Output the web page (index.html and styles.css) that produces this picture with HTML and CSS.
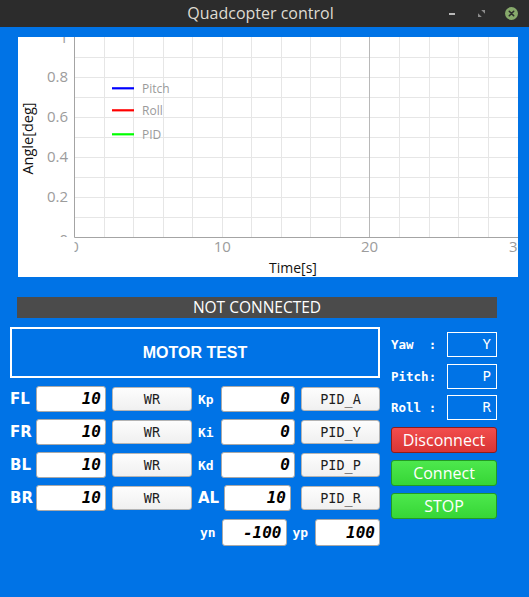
FILE: index.html
```html
<!DOCTYPE html>
<html>
<head>
<meta charset="utf-8">
<title>Quadcopter control</title>
<link rel="stylesheet" href="styles.css">
</head>
<body>
<div class="titlebar">
  <div class="title">Quadcopter control</div>
  <div class="controls">
    <span class="min"></span>
    <svg class="restore" width="7" height="7" viewBox="0 0 7 7"><path d="M0 7V3.2L3.8 7Z M7 0V3.8L3.2 0Z" fill="#8c8c8c"/></svg>
    <svg class="close" width="13" height="13" viewBox="0 0 13 13"><circle cx="6.5" cy="6.5" r="6.5" fill="#87a96b"/><path d="M4.3 4.3L8.7 8.7M8.7 4.3L4.3 8.7" stroke="#2c2c2c" stroke-width="1.6" stroke-linecap="round"/></svg>
  </div>
</div>

<div class="chart">
  <svg width="500" height="240" viewBox="0 0 500 240" font-family="'Open Sans', sans-serif">
    <defs>
      <clipPath id="cy"><rect x="0" y="0" width="60" height="200"/></clipPath>
      <clipPath id="cx"><rect x="56.5" y="200" width="444" height="40"/></clipPath>
    </defs>
    <path d="M56 20.5H500M56 40.5H500M56 60.5H500M56 80.5H500M56 100.5H500M56 120.5H500M56 140.5H500M56 160.5H500M56 180.5H500" stroke="#e6e6e6" stroke-width="1" fill="none"/>
    <path d="M86.5 0V200M115.5 0V200M145.5 0V200M174.5 0V200M204.5 0V200M233.5 0V200M263.5 0V200M292.5 0V200M322.5 0V200M381.5 0V200M411.5 0V200M440.5 0V200M470.5 0V200" stroke="#e6e6e6" stroke-width="1" fill="none"/>
    <path d="M351.5 0V200" stroke="#b8b8b8" stroke-width="1" fill="none"/>
    <path d="M56.5 0V200.5H500" stroke="#a4a4a4" stroke-width="1" fill="none"/>
    <g clip-path="url(#cy)" fill="#9c9c9c" font-size="15" text-anchor="end">
      <text x="50" y="6.3">1</text>
      <text x="50" y="45.4">0.8</text>
      <text x="50" y="85.4">0.6</text>
      <text x="50" y="125.4">0.4</text>
      <text x="50" y="165.4">0.2</text>
      <text x="50" y="207.5">0</text>
    </g>
    <g clip-path="url(#cx)" fill="#9c9c9c" font-size="15" text-anchor="middle">
      <text x="56.5" y="214.7">0</text>
      <text x="204.3" y="214.7">10</text>
      <text x="351.5" y="214.7">20</text>
      <text x="499.5" y="214.7">30</text>
    </g>
    <text x="275" y="236.3" font-size="14" fill="#111" text-anchor="middle">Time[s]</text>
    <text transform="translate(14.5 101.5) rotate(-90)" font-size="14.5" fill="#111" text-anchor="middle">Angle[deg]</text>
    <g stroke-width="2.2">
      <path d="M94 51.3H116" stroke="#0000ff"/>
      <path d="M94 73.3H116" stroke="#ff0000"/>
      <path d="M94 97.3H116" stroke="#00ff00"/>
    </g>
    <g fill="#9a9a9a" font-size="12">
      <text x="124" y="55.6">Pitch</text>
      <text x="124" y="77.6">Roll</text>
      <text x="124" y="101.6">PID</text>
    </g>
  </svg>
</div>

<div class="status">NOT CONNECTED</div>

<div class="lower">
  <div class="left">
    <div class="motor">MOTOR TEST</div>
    <div class="rows">
      <div class="row">
        <span class="lbl big">FL</span>
        <div class="field w70">10</div>
        <div class="btn wr">WR</div>
        <span class="lbl sm">Kp</span>
        <div class="field w74">0</div>
        <div class="btn pid">PID_A</div>
      </div>
      <div class="row">
        <span class="lbl big">FR</span>
        <div class="field w70">10</div>
        <div class="btn wr">WR</div>
        <span class="lbl sm">Ki</span>
        <div class="field w74">0</div>
        <div class="btn pid">PID_Y</div>
      </div>
      <div class="row">
        <span class="lbl big">BL</span>
        <div class="field w70">10</div>
        <div class="btn wr">WR</div>
        <span class="lbl sm">Kd</span>
        <div class="field w74">0</div>
        <div class="btn pid">PID_P</div>
      </div>
      <div class="row">
        <span class="lbl big">BR</span>
        <div class="field w70">10</div>
        <div class="btn wr">WR</div>
        <span class="lbl big al">AL</span>
        <div class="field w67">10</div>
        <div class="btn pid pidr">PID_R</div>
      </div>
      <div class="row yrow">
        <span class="lbl sm yn">yn</span>
        <div class="field w65">-100</div>
        <span class="lbl sm yp">yp</span>
        <div class="field w65">100</div>
      </div>
    </div>
  </div>

  <div class="right">
    <div class="rrow"><span class="rlbl">Yaw  :</span><div class="rbox">Y</div></div>
    <div class="rrow r2"><span class="rlbl">Pitch:</span><div class="rbox">P</div></div>
    <div class="rrow r3"><span class="rlbl">Roll :</span><div class="rbox">R</div></div>
    <div class="act red">Disconnect</div>
    <div class="act green">Connect</div>
    <div class="act green">STOP</div>
  </div>
</div>
</body>
</html>
```

FILE: styles.css
```css
html, body {
  margin: 0;
  padding: 0;
}
body {
  width: 529px;
  height: 597px;
  overflow: hidden;
  background: #0073e6;
  font-family: "Open Sans", "DejaVu Sans", sans-serif;
}

/* title bar */
.titlebar {
  height: 27px;
  background: #2c2c2c;
  display: flex;
  align-items: center;
}
.title {
  flex: 1;
  padding-left: 81px;
  text-align: center;
  color: #dfdbd2;
  font-size: 16px;
  line-height: 27px;
}
.controls {
  width: 89px;
  display: flex;
  align-items: center;
  padding-left: 9px;
  box-sizing: border-box;
}
.min {
  width: 6px;
  height: 2px;
  background: #b8b8b8;
}
.restore {
  margin-left: 23px;
  display: block;
}
.close {
  margin-left: 20px;
  display: block;
}

/* chart */
.chart {
  margin: 10px 0 0 18px;
  width: 500px;
  height: 240px;
  background: #ffffff;
}
.chart svg {
  display: block;
}

/* status */
.status {
  margin: 20px 0 0 17px;
  width: 480px;
  height: 21px;
  background: #4b4b4b;
  color: #ffffff;
  font-size: 15.5px;
  line-height: 21px;
  text-align: center;
}

/* lower section */
.lower {
  display: flex;
}
.left {
  margin-left: 10px;
  width: 370px;
  padding-top: 9px;
}
.motor {
  height: 51px;
  box-sizing: border-box;
  border: 2px solid #ffffff;
  display: flex;
  align-items: center;
  justify-content: center;
  color: #ffffff;
  font-family: "Liberation Sans", Arial, sans-serif;
  font-weight: bold;
  font-size: 16px;
}
.rows {
  margin-top: 8px;
  display: flex;
  flex-direction: column;
  gap: 7px;
}
.row {
  display: flex;
  align-items: center;
  height: 26px;
}
.yrow {
  height: 27px;
  margin-top: 1px;
}
.lbl {
  color: #ffffff;
  font-weight: bold;
  white-space: pre;
}
.lbl.big {
  width: 26px;
  font-family: "DejaVu Sans", sans-serif;
  font-size: 15px;
}
.lbl.sm {
  width: 23px;
  margin-left: 6px;
  font-family: "DejaVu Sans Mono", monospace;
  font-size: 13px;
}
.lbl.al {
  margin-left: 6px;
}
.lbl.yn {
  margin-left: 190px;
  width: 22px;
}
.lbl.yp {
  margin-left: 6px;
  width: 23px;
}

.field {
  height: 26px;
  box-sizing: border-box;
  background: #ffffff;
  border: 1px solid #a9a9a9;
  border-radius: 3px;
  text-align: right;
  padding-right: 4px;
  font-family: "DejaVu Sans Mono", monospace;
  font-style: italic;
  font-weight: bold;
  font-size: 16px;
  line-height: 24px;
  color: #000000;
}
.yrow .field {
  height: 27px;
  line-height: 25px;
}
.w70 { width: 70px; }
.w74 { width: 74px; }
.w67 { width: 67px; }
.w65 { width: 65px; }

.btn {
  height: 24px;
  box-sizing: border-box;
  border: 1px solid #b4b4b4;
  border-radius: 3px;
  background: linear-gradient(#fdfdfd, #f0f0f0);
  font-family: "DejaVu Sans Mono", monospace;
  font-size: 13.5px;
  line-height: 22px;
  text-align: center;
  color: #1e1e1e;
}
.btn.wr {
  width: 80px;
  margin-left: 6px;
}
.btn.pid {
  width: 79px;
  margin-left: 6px;
}
.btn.pidr {
  margin-left: 10px;
}

/* right panel */
.right {
  margin-left: 11px;
  width: 106px;
  padding-top: 14px;
  display: flex;
  flex-direction: column;
}
.rrow {
  display: flex;
  align-items: center;
  height: 25px;
}
.r2 { margin-top: 7px; }
.r3 { margin-top: 6px; }
.rlbl {
  width: 56px;
  color: #ffffff;
  font-family: "DejaVu Sans Mono", monospace;
  font-weight: bold;
  font-size: 12.5px;
  white-space: pre;
}
.rbox {
  width: 50px;
  height: 25px;
  box-sizing: border-box;
  border: 1px solid #ffffff;
  color: #ffffff;
  text-align: right;
  padding-right: 5px;
  font-family: "DejaVu Sans Mono", monospace;
  font-size: 14px;
  line-height: 23px;
}
.act {
  margin-top: 7px;
  height: 26px;
  box-sizing: border-box;
  border-radius: 3px;
  border: 1px solid;
  color: #ffffff;
  font-size: 16px;
  line-height: 24px;
  text-align: center;
}
.act.red {
  background: linear-gradient(#f24d4d, #d93535);
  border-color: #8e1c1c;
}
.act.green {
  background: linear-gradient(#4de84d, #36d636);
  border-color: #239a23;
}
```
